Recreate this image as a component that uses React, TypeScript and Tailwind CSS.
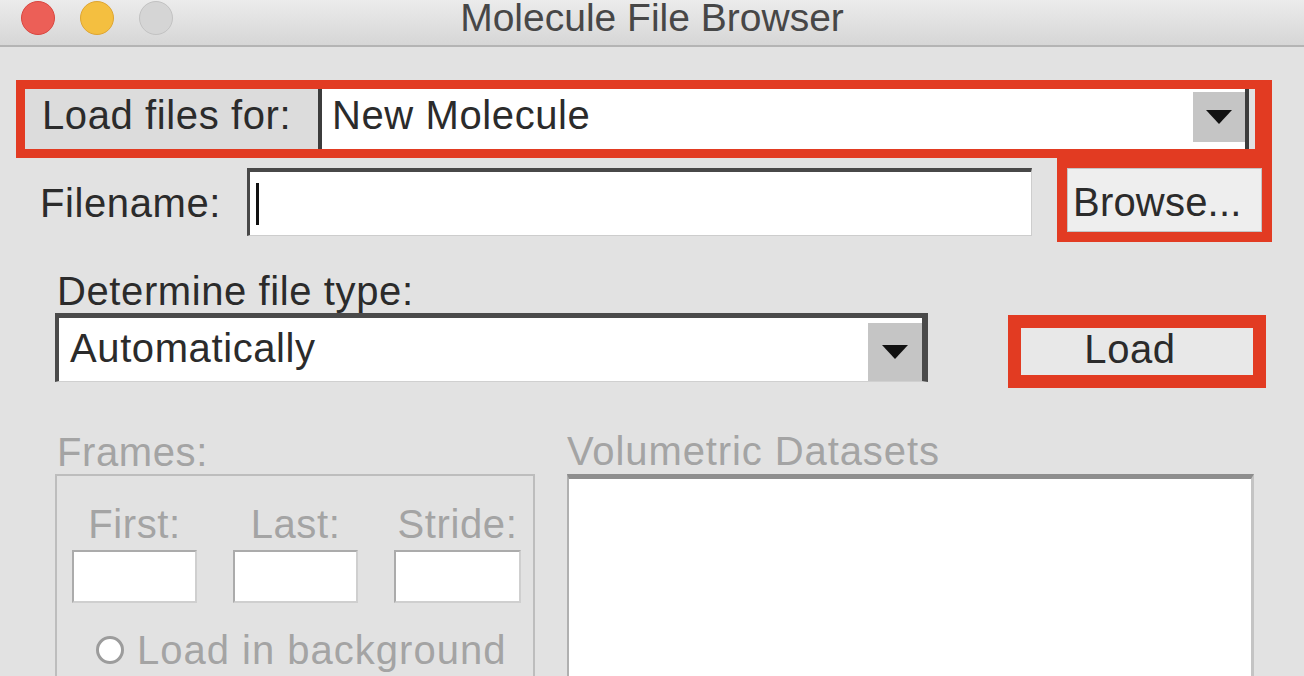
import React from 'react'

function DropArrow({ size }: { size: 'lg' | 'md' }) {
  return (
    <div
      className={`flex items-center justify-center bg-[#c5c5c5] ${
        size === 'lg' ? 'w-[52px] h-[50px] mb-[4px]' : 'w-[54px] h-[58px] self-end'
      }`}
    >
      <svg width="26" height="14" viewBox="0 0 26 14">
        <polygon points="0,0 26,0 13,14" fill="#111" />
      </svg>
    </div>
  )
}

function FrameEntry() {
  return <div className="h-[53px] bg-white border-2 border-[#ababab] border-b-[#cfcfcf] border-r-[#cfcfcf]" />
}

export default function App() {
  return (
    <div className="w-[1304px] h-[676px] overflow-hidden bg-[#e2e2e2] font-['Liberation_Sans',Arial,sans-serif] text-[40px] leading-none tracking-[0.6px] text-[#2b2b2b]">
      {/* title bar */}
      <div className="h-[47px] grid grid-cols-[1fr_auto_1fr] items-start bg-linear-to-b from-[#ececec] to-[#d6d6d6] border-b-2 border-[#b4b4b4]">
        <div className="flex gap-[25px] pl-[21px] pt-[1px]">
          <div className="w-[34px] h-[34px] rounded-full bg-[#ec5f57] border border-[#d9463f]" />
          <div className="w-[34px] h-[34px] rounded-full bg-[#f4bf40] border border-[#dea532]" />
          <div className="w-[34px] h-[34px] rounded-full bg-[#d5d5d5] border border-[#c2c2c2]" />
        </div>
        <div className="text-[39px] leading-[36px] tracking-normal text-[#474747]">Molecule File Browser</div>
        <div />
      </div>

      {/* load files for */}
      <div className="mt-[33px] ml-[16px] w-[1256px] h-[78px] flex border-[9px] border-r-[17px] border-[#e23b22]">
        <div className="w-[293px] bg-[#dcdcdc] flex items-center pl-[17px]">
          <span className="mb-[8px]">Load files for:</span>
        </div>
        <div className="w-[931px] bg-white border-l-[4px] border-r-[4px] border-[#3c3c3c] flex items-center">
          <span className="flex-1 pl-[10px] mb-[8px]">New Molecule</span>
          <DropArrow size="lg" />
        </div>
      </div>

      {/* filename */}
      <div className="flex h-[84px]">
        <div className="w-[247px] pl-[40px] pt-[6px] flex items-center">Filename:</div>
        <div className="mt-[10px] w-[785px] h-[68px] bg-white border-t-[4px] border-l-[3px] border-[#484848] border-b border-r border-b-[#cdcdcd] border-r-[#cdcdcd] flex items-center pl-[6px]">
          <div className="w-[3px] h-[42px] bg-[#111]" />
        </div>
        <div className="ml-[25px] w-[215px] h-[84px] border-[10px] border-[#e23b22]">
          <div className="h-full bg-[#eeeeee] border border-[#c4c4c4] flex items-center pl-[5px] pt-[4px] tracking-[0.2px]">
            Browse...
          </div>
        </div>
      </div>

      {/* file type */}
      <div className="flex">
        <div className="ml-[55px] w-[873px]">
          <div className="h-[71px] pl-[2px] pt-[29px]">Determine file type:</div>
          <div className="h-[69px] bg-white border-t-[5px] border-l-[4px] border-r-[6px] border-[#4a4a4a] border-b border-b-[#d0d0d0] flex items-center">
            <span className="flex-1 pl-[11px] mb-[4px]">Automatically</span>
            <DropArrow size="md" />
          </div>
        </div>
        <div className="ml-[80px] mt-[73px] w-[258px] h-[73px] border-[13px] border-[#e23b22]">
          <div className="h-full bg-[#e8e8e8] flex items-center justify-center pb-[6px] pr-[14px]">Load</div>
        </div>
      </div>

      {/* frames + volumetric */}
      <div className="flex text-[#a4a4a4]">
        <div className="ml-[55px] w-[480px]">
          <div className="h-[86px] pl-[2px] pt-[44px]">Frames:</div>
          <div className="h-[300px] border-2 border-[#bdbdbd] pl-[15px] pt-[28px]">
            <div className="grid grid-cols-[125px_125px_127px] gap-x-[36px] gap-y-[6px]">
              <div className="text-center">First:</div>
              <div className="text-center">Last:</div>
              <div className="text-center">Stride:</div>
              <FrameEntry />
              <FrameEntry />
              <FrameEntry />
            </div>
            <div className="mt-[27px] h-[40px] flex items-center pl-[24px]">
              <div className="w-[28px] h-[28px] rounded-full bg-white border-[3px] border-[#9c9c9c]" />
              <span className="ml-[13px] tracking-[1px]">Load in background</span>
            </div>
          </div>
        </div>
        <div className="ml-[32px] w-[687px]">
          <div className="h-[86px] pt-[43px] tracking-[0.9px]">Volumetric Datasets</div>
          <div className="h-[300px] bg-white border-t-[5px] border-[#8e8e8e] border-l-2 border-l-[#b0b0b0] border-r-[3px] border-r-[#c4c4c4]" />
        </div>
      </div>
    </div>
  )
}
